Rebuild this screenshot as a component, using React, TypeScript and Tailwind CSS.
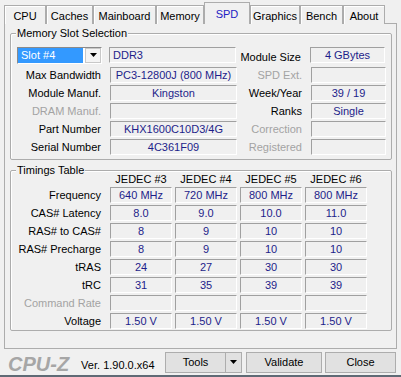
import React from "react";

type Tab = { label: string; w: string; active?: boolean };

const tabs: Tab[] = [
    { label: "CPU", w: "w-[42px]" },
    { label: "Caches", w: "w-[47px]" },
    { label: "Mainboard", w: "w-[63px]" },
    { label: "Memory", w: "w-[48px]" },
    { label: "SPD", w: "w-[46px]", active: true },
    { label: "Graphics", w: "w-[50px]" },
    { label: "Bench", w: "w-[43px]" },
    { label: "About", w: "w-[42px]" },
];

// [label, value, disabled]
const leftRows: [string, string, boolean][] = [
    ["Max Bandwidth", "PC3-12800J (800 MHz)", false],
    ["Module Manuf.", "Kingston", false],
    ["DRAM Manuf.", "", true],
    ["Part Number", "KHX1600C10D3/4G", false],
    ["Serial Number", "4C361F09", false],
];

const rightRows: [string, string, boolean][] = [
    ["SPD Ext.", "", true],
    ["Week/Year", "39 / 19", false],
    ["Ranks", "Single", false],
    ["Correction", "", true],
    ["Registered", "", true],
];

const timings: { label: string; values: string[]; dim?: boolean }[] = [
    { label: "Frequency", values: ["640 MHz", "720 MHz", "800 MHz", "800 MHz"] },
    { label: "CAS# Latency", values: ["8.0", "9.0", "10.0", "11.0"] },
    { label: "RAS# to CAS#", values: ["8", "9", "10", "10"] },
    { label: "RAS# Precharge", values: ["8", "9", "10", "10"] },
    { label: "tRAS", values: ["24", "27", "30", "30"] },
    { label: "tRC", values: ["31", "35", "39", "39"] },
    { label: "Command Rate", values: ["", "", "", ""], dim: true },
    { label: "Voltage", values: ["1.50 V", "1.50 V", "1.50 V", "1.50 V"] },
];

const Field: React.FC<{ w: string; left?: boolean; children?: React.ReactNode }> = ({ w, left, children }) => (
    <div
        className={`${w} h-[16px] shrink-0 flex items-center border border-t-[#a0a0a0] border-l-[#a0a0a0] border-b-white border-r-white text-[#1d1d8a] whitespace-nowrap ${
            left ? "justify-start pl-[3px]" : "justify-center"
        }`}
    >
        {children}
    </div>
);

const Label: React.FC<{ w: string; dim?: boolean; children: React.ReactNode }> = ({ w, dim, children }) => (
    <div className={`${w} shrink-0 text-right whitespace-nowrap ${dim ? "text-[#a3a3a3]" : "text-black"}`}>{children}</div>
);

const GroupBox: React.FC<{ title: string; className: string; children: React.ReactNode }> = ({ title, className, children }) => (
    <div className={`relative w-[382px] border border-[#acacac] rounded-[2px] shadow-[inset_1px_1px_0_#ffffff] ${className}`}>
        <span className="absolute -top-[7px] left-[5px] px-[1px] bg-[#f0f0f0] leading-[13px]">{title}</span>
        {children}
    </div>
);

const Arrow: React.FC = () => (
    <svg width="7" height="4" viewBox="0 0 7 4">
        <path d="M0 0h7L3.5 4z" fill="#000" />
    </svg>
);

export default function App() {
    return (
        <div className="w-[401px] h-[377px] overflow-hidden bg-[#f0f0f0] text-[11px] leading-none text-black font-['Liberation_Sans',Arial,sans-serif]">
            {/* tab strip */}
            <div className="flex items-end h-[24px] pl-[4px]">
                {tabs.map((t) =>
                    t.active ? (
                        <div
                            key={t.label}
                            className={`relative z-10 ${t.w} h-[22px] flex items-center justify-center pt-[2px] bg-[#f0f0f0] border border-b-0 border-[#acacac] text-[#2222c4]`}
                        >
                            {t.label}
                        </div>
                    ) : (
                        <div
                            key={t.label}
                            className={`${t.w} h-[19px] flex items-center justify-center pt-[3px] bg-[#f0f0f0] border border-b-0 border-[#acacac] shadow-[inset_1px_1px_0_#ffffff]`}
                        >
                            {t.label}
                        </div>
                    )
                )}
            </div>

            {/* page */}
            <div className="-mt-[1px] ml-[4px] w-[393px] h-[326px] border border-[#acacac] bg-[#f0f0f0] pl-[5px]">
                <GroupBox title="Memory Slot Selection" className="mt-[9px] h-[127px] pt-[13px]">
                    <div className="flex items-center h-[16px]">
                        <div className="ml-[6px] w-[85px] h-[17px] shrink-0 flex border border-t-[#8a8a8a] border-l-[#8a8a8a] border-b-white border-r-white bg-white">
                            <div className="flex-1 flex items-center pl-[3px] bg-[#3399ff] text-white">Slot #4</div>
                            <div className="w-[16px] ml-[2px] flex items-center justify-center bg-[#f4f4f4] border border-[#c8c8c8]">
                                <Arrow />
                            </div>
                        </div>
                        <div className="ml-[7px]">
                            <Field w="w-[127px]" left>
                                DDR3
                            </Field>
                        </div>
                        <Label w="w-[65px]">
                            <span className="relative top-[2px]">Module Size</span>
                        </Label>
                        <div className="ml-[9px]">
                            <Field w="w-[75px]">4 GBytes</Field>
                        </div>
                    </div>
                    <div className="mt-[4px] flex flex-col gap-[2px]">
                        {leftRows.map(([l, v, dim], i) => (
                            <div key={l} className="flex items-center h-[16px]">
                                <Label w="w-[90px]" dim={dim}>
                                    {l}
                                </Label>
                                <div className="ml-[9px]">
                                    <Field w="w-[127px]">{v}</Field>
                                </div>
                                <Label w="w-[65px]" dim={rightRows[i][2]}>
                                    {rightRows[i][0]}
                                </Label>
                                <div className="ml-[9px]">
                                    <Field w="w-[75px]">{rightRows[i][1]}</Field>
                                </div>
                            </div>
                        ))}
                    </div>
                </GroupBox>

                <GroupBox title="Timings Table" className="mt-[10px] pb-[1px]">
                    <div className="flex items-center h-[16px] pt-[1px]">
                        <div className="w-[99px] shrink-0" />
                        {["JEDEC #3", "JEDEC #4", "JEDEC #5", "JEDEC #6"].map((h) => (
                            <div key={h} className="w-[62px] mr-[3px] text-center">
                                {h}
                            </div>
                        ))}
                    </div>
                    <div className="flex flex-col gap-[2px]">
                        {timings.map((r) => (
                            <div key={r.label} className="flex items-center h-[16px]">
                                <Label w="w-[90px]" dim={r.dim}>
                                    {r.label}
                                </Label>
                                <div className="ml-[9px] flex gap-[3px]">
                                    {r.values.map((v, i) => (
                                        <Field key={i} w="w-[62px]">
                                            {v}
                                        </Field>
                                    ))}
                                </div>
                            </div>
                        ))}
                    </div>
                </GroupBox>
            </div>

            {/* footer */}
            <div className="h-[26px] flex items-center pl-[8px] pr-[5px]">
                <span className="pt-[3px] text-[20px] font-bold italic text-[#a6a6a6]">CPU-Z</span>
                <span className="ml-[12px] pt-[6px]">Ver. 1.90.0.x64</span>
                <div className="ml-auto flex items-center">
                    <div className="flex h-[21px] border border-[#adadad] bg-[#e1e1e1]">
                        <div className="w-[59px] flex items-center justify-center">Tools</div>
                        <div className="w-[16px] flex items-center justify-center border-l border-[#adadad]">
                            <Arrow />
                        </div>
                    </div>
                    <div className="ml-[4px] w-[76px] h-[21px] flex items-center justify-center border border-[#adadad] bg-[#e1e1e1]">
                        Validate
                    </div>
                    <div className="ml-[3px] w-[71px] h-[21px] flex items-center justify-center border border-[#adadad] bg-[#e1e1e1]">
                        Close
                    </div>
                </div>
            </div>
            <div className="h-[2px] bg-[#5f6a75]" />
        </div>
    );
}
